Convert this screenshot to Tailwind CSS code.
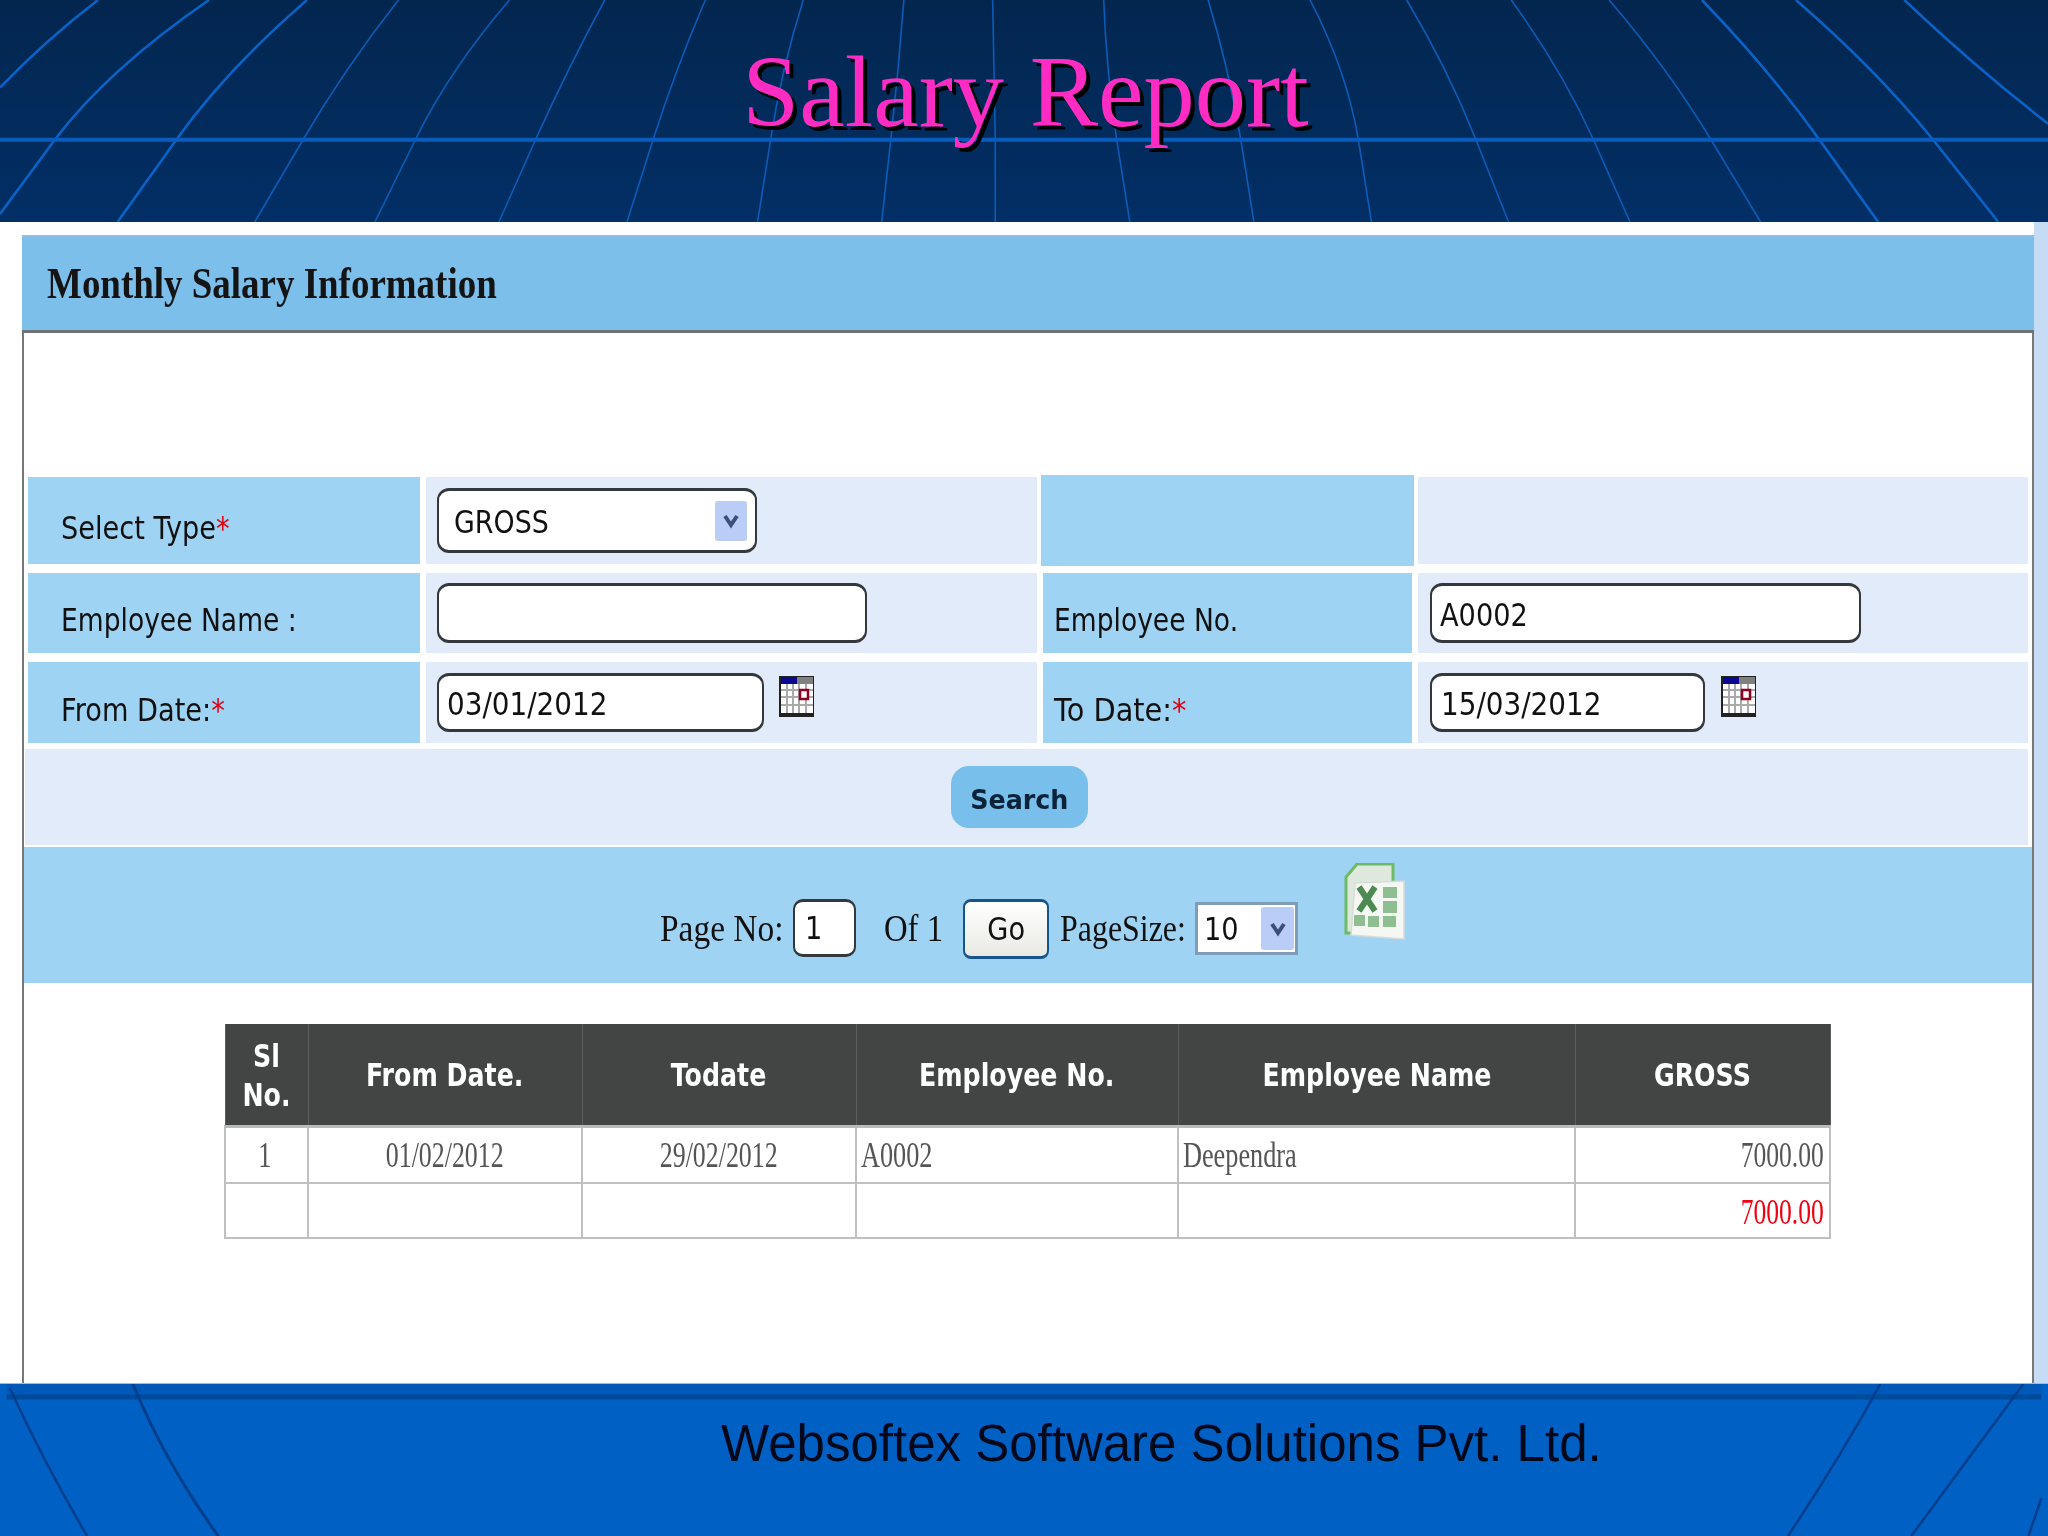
<!DOCTYPE html>
<html lang="en">
<head>
<meta charset="UTF-8">
<script src="https://cdn.jsdelivr.net/npm/@tailwindcss/browser@4"></script>
<title>Salary Report</title>
</head>
<body class="w-[2048px] h-[1536px] overflow-hidden flex flex-col bg-white font-['DejaVu_Sans',sans-serif] text-[#111]">

<!-- slide header -->
<header class="relative h-[222px] shrink-0 bg-gradient-to-b from-[#03264f] to-[#022f66]">
  <svg class="absolute inset-0 w-full h-full" viewBox="0 0 1568 664" preserveAspectRatio="none" fill="none" stroke="#0b5cb8">
    <g stroke-width="1.6">
      <path vector-effect="non-scaling-stroke" d="M305 0Q263 210 232 418L195 664"/>
      <path vector-effect="non-scaling-stroke" d="M390 0Q344 210 318 418L287 664"/>
      <path vector-effect="non-scaling-stroke" d="M463 0Q434 210 410 418L382 664"/>
      <path vector-effect="non-scaling-stroke" d="M540 0Q517 210 500 418L480 664"/>
      <path vector-effect="non-scaling-stroke" d="M615 0Q598 210 590 418L580 664"/>
      <path vector-effect="non-scaling-stroke" d="M692 0Q688 210 682 418L675 664"/>
      <path vector-effect="non-scaling-stroke" d="M760 0L762 418V664"/>
      <path vector-effect="non-scaling-stroke" d="M845 0Q847 210 855 418L865 664"/>
      <path vector-effect="non-scaling-stroke" d="M925 0Q941 210 950 418L960 664"/>
      <path vector-effect="non-scaling-stroke" d="M1003 0Q1031 210 1040 418L1050 664"/>
      <path vector-effect="non-scaling-stroke" d="M1077 0Q1109 210 1130 418L1155 664"/>
      <path vector-effect="non-scaling-stroke" d="M1157 0Q1196 210 1220 418L1248 664"/>
      <path vector-effect="non-scaling-stroke" d="M1232 0Q1278 210 1310 418L1348 664"/>
    </g>
    <g stroke-width="2.6" stroke="#0a62c6">
      <path vector-effect="non-scaling-stroke" d="M75 0Q35 120 0 262"/>
      <path vector-effect="non-scaling-stroke" d="M160 0Q82 210 42 418L0 640"/>
      <path vector-effect="non-scaling-stroke" d="M235 0Q173 210 135 418L90 664"/>
      <path vector-effect="non-scaling-stroke" d="M1303 0Q1355 210 1393 418L1438 664"/>
      <path vector-effect="non-scaling-stroke" d="M1375 0Q1437 210 1480 418L1530 664"/>
      <path vector-effect="non-scaling-stroke" d="M1458 0Q1512 200 1568 370"/>
    </g>
    <path vector-effect="non-scaling-stroke" d="M0 418H1568" stroke-width="4" stroke="#0a5cbc"/>
  </svg>
  <h1 class="relative pl-[3px] pt-[32px] text-center font-['Liberation_Serif',serif] text-[102.5px] leading-[120px] text-[#ff2cc4] [text-shadow:4px_4px_0_#000]">Salary Report</h1>
</header>

<main class="flex-1 flex min-h-0">
  <section class="ml-[22px] w-[2012px] mt-[13px] border-l-2 border-r-2 border-[#777] min-h-0">
    <h2 class="-ml-[2px] -mr-[2px] h-[98px] flex items-center pl-[25px] bg-[#7cbfea] border-t-[2px] border-t-[#8cc0ea] border-b-[3px] border-b-[#6f7276] font-['Liberation_Serif',serif] font-bold text-[44px] text-[#141414]">
      <span class="inline-block origin-left scale-x-[.84] whitespace-nowrap">Monthly Salary Information</span>
    </h2>

    <!-- search form -->
    <div class="mt-[144px] px-[4px]">
      <div class="grid grid-cols-[392px_611px_369px_610px] grid-rows-[87px_80px_81px] gap-x-[6px] gap-y-[9px] text-[32px]">
        <div class="bg-[#9fd3f3] flex items-end pl-[33px] pb-[12px]"><span class="inline-block origin-left scale-x-[.85] whitespace-nowrap">Select Type<span class="text-[#e00010]">*</span></span></div>
        <div class="bg-[#e2ebf9] pl-[11px] pt-[11px]">
          <div class="w-[320px] h-[65px] bg-white rounded-[12px] border-2 border-t-[3px] border-b-[3px] border-[#33383c] flex items-center justify-between pl-[15px] pr-[8px]">
            <span class="inline-block origin-left scale-x-[.84] pt-[3px]">GROSS</span>
            <span class="w-[32px] h-[40px] rounded-[3px] bg-[#b9cdf6] flex items-center justify-center">
              <svg class="w-[18px] h-[18px]" viewBox="0 0 18 18" fill="none" stroke="#3a5078" stroke-width="4"><path d="M3 4l6 9 6-9"/></svg>
            </span>
          </div>
        </div>
        <div class="bg-[#9fd3f3] -mx-[2px] -my-[2px]"></div>
        <div class="bg-[#e2ebf9]"></div>

        <div class="bg-[#9fd3f3] flex items-end pl-[33px] pb-[9px]"><span class="inline-block origin-left scale-x-[.83] whitespace-nowrap">Employee Name :</span></div>
        <div class="bg-[#e2ebf9] pl-[11px] pt-[10px]">
          <div class="w-[430px] h-[60px] bg-white rounded-[12px] border-2 border-t-[3px] border-b-[3px] border-[#33383c]"></div>
        </div>
        <div class="bg-[#9fd3f3] flex items-end pl-[11px] pb-[9px]"><span class="inline-block origin-left scale-x-[.83] whitespace-nowrap">Employee No.</span></div>
        <div class="bg-[#e2ebf9] pl-[12px] pt-[10px]">
          <div class="w-[431px] h-[60px] bg-white rounded-[12px] border-2 border-t-[3px] border-b-[3px] border-[#33383c] flex items-center pl-[8px]"><span class="inline-block origin-left scale-x-[.85] pt-[3px]">A0002</span></div>
        </div>

        <div class="bg-[#9fd3f3] flex items-end pl-[33px] pb-[9px]"><span class="inline-block origin-left scale-x-[.85] whitespace-nowrap">From Date:<span class="text-[#e00010]">*</span></span></div>
        <div class="bg-[#e2ebf9] pl-[11px] pt-[11px] flex items-start">
          <div class="w-[327px] h-[59px] bg-white rounded-[12px] border-2 border-t-[3px] border-b-[3px] border-[#33383c] flex items-center pl-[8px]"><span class="inline-block origin-left scale-x-[.87] pt-[3px]">03/01/2012</span></div>
          <svg class="ml-[15px] mt-[3px] w-[35px] h-[41px]" viewBox="0 0 35 41">
            <rect width="35" height="41" fill="#222"/>
            <rect x="2" y="1" width="32" height="36" fill="#fff"/>
            <rect x="2" y="1" width="16" height="7" fill="#0a0a90"/>
            <rect x="18" y="1" width="16" height="7" fill="#808080"/>
            <path d="M8 8v29M14 8v29M20 8v29M27 8v29M2 14h32M2 21h32M2 29h32" stroke="#aaa" stroke-width="2"/>
            <rect x="21" y="14" width="8" height="9" fill="#fff" stroke="#900020" stroke-width="2.5"/>
          </svg>
        </div>
        <div class="bg-[#9fd3f3] flex items-end pl-[11px] pb-[9px]"><span class="inline-block origin-left scale-x-[.9] whitespace-nowrap">To Date:<span class="text-[#e00010]">*</span></span></div>
        <div class="bg-[#e2ebf9] pl-[12px] pt-[11px] flex items-start">
          <div class="w-[275px] h-[59px] bg-white rounded-[12px] border-2 border-t-[3px] border-b-[3px] border-[#33383c] flex items-center pl-[9px]"><span class="inline-block origin-left scale-x-[.87] pt-[3px]">15/03/2012</span></div>
          <svg class="ml-[16px] mt-[3px] w-[35px] h-[41px]" viewBox="0 0 35 41">
            <rect width="35" height="41" fill="#222"/>
            <rect x="2" y="1" width="32" height="36" fill="#fff"/>
            <rect x="2" y="1" width="16" height="7" fill="#0a0a90"/>
            <rect x="18" y="1" width="16" height="7" fill="#808080"/>
            <path d="M8 8v29M14 8v29M20 8v29M27 8v29M2 14h32M2 21h32M2 29h32" stroke="#aaa" stroke-width="2"/>
            <rect x="21" y="14" width="8" height="9" fill="#fff" stroke="#900020" stroke-width="2.5"/>
          </svg>
        </div>
      </div>

      <div class="-ml-[3px] mt-[6px] h-[96px] bg-[#e2ebf9] flex justify-center pt-[17px] pr-[15px]">
        <button class="w-[137px] h-[62px] rounded-[18px] bg-[#78bfeb] font-bold text-[27px] text-[#0b2239] pt-[7px]"><span class="inline-block scale-x-[.94]">Search</span></button>
      </div>
    </div>

    <!-- pager -->
    <div class="mt-[2px] h-[136px] bg-[#9fd3f3] relative flex items-start pl-[636px] pt-[52px] font-['Liberation_Serif',serif] text-[38px]">
      <span class="inline-block w-[133px] h-[58px] leading-[58px] whitespace-nowrap"><span class="inline-block origin-left scale-x-[.88]">Page No:</span></span>
      <div class="w-[63px] h-[58px] bg-white rounded-[10px] border-2 border-t-[3px] border-b-[3px] border-[#33383c] flex items-center pl-[10px] font-['DejaVu_Sans',sans-serif] text-[32px]"><span class="inline-block origin-left scale-x-[.85]">1</span></div>
      <span class="ml-[28px] w-[79px] h-[58px] leading-[58px] whitespace-nowrap"><span class="inline-block origin-left scale-x-[.86]">Of 1</span></span>
      <div class="w-[86px] h-[60px] rounded-[8px] border-y-[3px] border-x-2 border-[#15558c] bg-gradient-to-b from-white to-[#e9e9e4] flex items-center justify-center font-['DejaVu_Sans',sans-serif] text-[32px]"><span class="inline-block scale-x-[.85]">Go</span></div>
      <span class="ml-[11px] w-[135px] h-[58px] leading-[58px] whitespace-nowrap"><span class="inline-block origin-left scale-x-[.84]">PageSize:</span></span>
      <div class="mt-[3px] w-[103px] h-[53px] bg-white border-[3px] border-[#7f9db9] flex items-center justify-between pl-[6px] pr-[1px] font-['DejaVu_Sans',sans-serif] text-[32px]">
        <span class="inline-block origin-left scale-x-[.85]">10</span>
        <span class="w-[33px] h-[43px] rounded-[3px] bg-[#b9cdf6] flex items-center justify-center">
          <svg class="w-[18px] h-[18px]" viewBox="0 0 18 18" fill="none" stroke="#3a5078" stroke-width="4"><path d="M3 4l6 9 6-9"/></svg>
        </span>
      </div>
      <!-- excel icon -->
      <svg class="absolute left-[1319px] top-[16px] w-[62px] h-[77px] blur-[0.6px]" viewBox="0 0 62 77">
        <path d="M14 1H50V70H3V14Z" fill="#dfe8dc" stroke="#6dbb62" stroke-width="3"/>
        <path d="M12 20L61 18V76L8 72Z" fill="#f4f7f2"/>
        <path d="M12 20L61 18V76L8 72Z" fill="none" stroke="#d8dcd8" stroke-width="1.5"/>
        <path d="M16 24L32 48M32 24L16 48" stroke="#4c8a52" stroke-width="6"/>
        <g fill="#8fbe90">
          <rect x="40" y="24" width="14" height="11"/>
          <rect x="40" y="38" width="14" height="12"/>
          <rect x="40" y="53" width="13" height="11"/>
          <rect x="25" y="53" width="11" height="11"/>
          <rect x="11" y="52" width="11" height="11"/>
        </g>
      </svg>
    </div>

    <!-- result table -->
    <table class="mt-[41px] ml-[200px] w-[1605px] table-fixed border-collapse font-['Liberation_Serif',serif] text-[35px] text-[#555]">
      <colgroup><col class="w-[83px]"><col class="w-[274px]"><col class="w-[274px]"><col class="w-[322px]"><col class="w-[397px]"><col class="w-[255px]"></colgroup>
      <thead class="bg-[#434544] text-white font-['DejaVu_Sans',sans-serif] text-[32px] font-bold leading-[39px]">
        <tr class="h-[102px] border-b-[3px] border-[#bbb]">
          <th class="border-x border-[#5c5e5d] font-bold pt-[3px]"><span class="inline-block scale-x-[.79]">Sl<br>No.</span></th>
          <th class="border-x border-[#5c5e5d] font-bold pt-[3px]"><span class="inline-block scale-x-[.79] whitespace-nowrap">From Date.</span></th>
          <th class="border-x border-[#5c5e5d] font-bold pt-[3px]"><span class="inline-block scale-x-[.79] whitespace-nowrap">Todate</span></th>
          <th class="border-x border-[#5c5e5d] font-bold pt-[3px]"><span class="inline-block scale-x-[.79] whitespace-nowrap">Employee No.</span></th>
          <th class="border-x border-[#5c5e5d] font-bold pt-[3px]"><span class="inline-block scale-x-[.79] whitespace-nowrap">Employee Name</span></th>
          <th class="border-x border-[#5c5e5d] font-bold pt-[3px]"><span class="inline-block scale-x-[.79] whitespace-nowrap">GROSS</span></th>
        </tr>
      </thead>
      <tbody class="leading-[44px]">
        <tr class="h-[57px]">
          <td class="border-2 border-[#c0c0c0] text-center pr-[3px] pt-[2px]"><span class="inline-block scale-x-[.75]">1</span></td>
          <td class="border-2 border-[#c0c0c0] text-center pt-[2px]"><span class="inline-block scale-x-[.74]">01/02/2012</span></td>
          <td class="border-2 border-[#c0c0c0] text-center pt-[2px]"><span class="inline-block scale-x-[.74]">29/02/2012</span></td>
          <td class="border-2 border-[#c0c0c0] pl-[4px] pt-[2px]"><span class="inline-block origin-left scale-x-[.75]">A0002</span></td>
          <td class="border-2 border-[#c0c0c0] pl-[4px] pt-[2px]"><span class="inline-block origin-left scale-x-[.75]">Deependra</span></td>
          <td class="border-2 border-[#c0c0c0] pr-[5px] pt-[2px] text-right"><span class="inline-block origin-right scale-x-[.73]">7000.00</span></td>
        </tr>
        <tr class="h-[55px]">
          <td class="border-2 border-[#c0c0c0]"></td>
          <td class="border-2 border-[#c0c0c0]"></td>
          <td class="border-2 border-[#c0c0c0]"></td>
          <td class="border-2 border-[#c0c0c0]"></td>
          <td class="border-2 border-[#c0c0c0]"></td>
          <td class="border-2 border-[#c0c0c0] pr-[5px] pt-[4px] text-right text-[#f00010]"><span class="inline-block origin-right scale-x-[.73]">7000.00</span></td>
        </tr>
      </tbody>
    </table>
  </section>
  <div class="flex-1 bg-[#c6dcf5]"></div>
</main>

<!-- slide footer -->
<footer class="relative h-[153px] shrink-0 bg-[#0060c4] border-t border-[#8fc0f0]">
  <svg class="absolute inset-0 w-full h-full" viewBox="0 0 2048 153" fill="none" stroke="#013f8c" stroke-width="3">
    <path d="M0 0H2048V13H0Z" fill="#0059b8" stroke="none"/>
    <path d="M0 13H2048" stroke="#004a9c" stroke-width="5"/>
    <path d="M3 4Q38 80 81 153" stroke-width="2.5"/>
    <path d="M127 0Q160 80 213 153"/>
    <path d="M1886 0Q1845 75 1793 153" stroke-width="2.5"/>
    <path d="M2030 0Q1972 78 1917 153" stroke-width="2.5"/>
    <path d="M2048 115L2035 153" stroke-width="2.5"/>
  </svg>
  <p class="relative pl-[721px] pt-[28px] font-['Liberation_Sans',sans-serif] text-[51px] leading-[64px] text-[#00081a] whitespace-nowrap">Websoftex Software Solutions Pvt. Ltd.</p>
</footer>
</body>
</html>
